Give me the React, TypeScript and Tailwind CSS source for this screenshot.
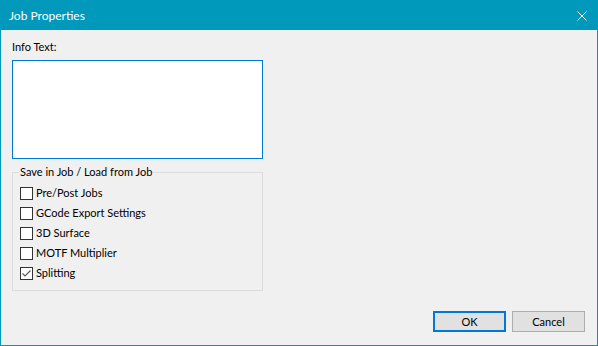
import React from 'react';

const items = [
    { label: 'Pre/Post Jobs', checked: false },
    { label: 'GCode Export Settings', checked: false },
    { label: '3D Surface', checked: false },
    { label: 'MOTF Multiplier', checked: false },
    { label: 'Splitting', checked: true },
];

const CheckBox = ({ checked }: { checked: boolean }) => (
    <span className="w-[13px] h-[13px] border border-[#333333] bg-white flex items-center justify-center shrink-0">
        {checked && (
            <svg width="11" height="11" viewBox="0 0 11 11">
                <polyline points="1.5,5.5 4,8 9.5,2.5" fill="none" stroke="#5a5a5a" strokeWidth="1.2" />
            </svg>
        )}
    </span>
);

const App = () => {
    return (
        <div
            className="w-[598px] h-[346px] border border-[#0099bc] bg-[#f0f0f0] flex flex-col text-[11px] text-black"
            style={{ fontFamily: '"Segoe UI", Lato, "Noto Sans", sans-serif' }}
        >
            <div className="h-[29px] bg-[#0099bc] flex items-center justify-between pl-[8px] pr-[10px] shrink-0">
                <span className="text-white text-[12px] leading-[16px]">Job Properties</span>
                <svg width="10" height="10" viewBox="0 0 10 10">
                    <path d="M0.5 0.5 L9.5 9.5 M9.5 0.5 L0.5 9.5" stroke="#ffffff" strokeWidth="1" />
                </svg>
            </div>

            <div className="flex-1 flex flex-col pl-[11px] pt-[9px]">
                <label className="leading-[16px]">Info Text:</label>
                <div className="mt-[5px] w-[251px] h-[99px] border border-[#0078d7] bg-white" />

                <fieldset className="mt-[5px] w-[251px] h-[127px] border border-[#dcdcdc] pl-[6px]">
                    <legend className="px-[1px] leading-[16px]">Save in Job / Load from Job</legend>
                    <div className="flex flex-col pt-[3px] pl-[1px]">
                        {items.map((item) => (
                            <div key={item.label} className="h-[20px] flex items-center gap-[3px]">
                                <CheckBox checked={item.checked} />
                                <span className="leading-[16px]">{item.label}</span>
                            </div>
                        ))}
                    </div>
                </fieldset>

                <div className="mt-auto flex justify-end gap-[6px] pr-[12px] pb-[13px]">
                    <button className="w-[73px] h-[21px] border-2 border-[#0078d7] bg-[#e1e1e1] leading-[16px]">OK</button>
                    <button className="w-[73px] h-[21px] border border-[#adadad] bg-[#e1e1e1] leading-[16px]">Cancel</button>
                </div>
            </div>
        </div>
    );
};

export default App;
